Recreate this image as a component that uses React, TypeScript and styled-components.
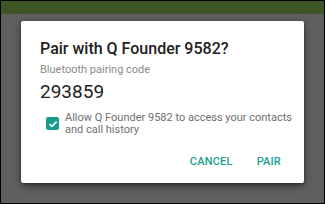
import styled, { createGlobalStyle } from "styled-components";

const GlobalStyle = createGlobalStyle`
  html, body {
    margin: 0;
    padding: 0;
    background: #000;
  }
  * {
    box-sizing: border-box;
  }
`;

const Screen = styled.div`
  width: 325px;
  height: 204px;
  border: 1px solid #000;
  background: #606060;
  display: flex;
  flex-direction: column;
  font-family: Roboto, "Noto Sans", sans-serif;
  overflow: hidden;
`;

const AppBar = styled.div`
  height: 13px;
  background: #3d5624;
  flex-shrink: 0;
`;

const Scrim = styled.div`
  flex: 1;
  padding: 7px 20px 0 20px;
`;

const Dialog = styled.div`
  width: 283px;
  height: 162px;
  background: #fff;
  border-radius: 2px;
  box-shadow: 0 3px 8px rgba(0, 0, 0, 0.45), 0 1px 3px rgba(0, 0, 0, 0.3);
  padding: 17px 8px 0 19px;
  display: flex;
  flex-direction: column;
`;

const Title = styled.div`
  font-size: 16px;
  line-height: 22px;
  font-weight: 500;
  color: #212121;
`;

const Label = styled.div`
  margin-top: 3px;
  font-size: 11px;
  line-height: 14px;
  color: #8a8a8a;
`;

const Code = styled.div`
  margin-top: 4px;
  font-size: 19px;
  line-height: 22px;
  color: #212121;
`;

const CheckRow = styled.label`
  margin-top: 9px;
  display: flex;
  align-items: flex-start;
  gap: 6px;
  padding-left: 6px;
`;

const Box = styled.span`
  width: 13px;
  height: 13px;
  margin-top: 5px;
  border-radius: 2px;
  background: #1a9c8c;
  display: flex;
  align-items: center;
  justify-content: center;
  flex-shrink: 0;
`;

const CheckText = styled.span`
  font-size: 11px;
  line-height: 12px;
  color: #6f6f6f;
`;

const Actions = styled.div`
  margin-top: auto;
  margin-bottom: 15px;
  display: flex;
  justify-content: flex-end;
  gap: 24px;
  padding-right: 15px;
`;

const ActionButton = styled.button`
  border: none;
  background: none;
  padding: 0;
  font-family: inherit;
  font-size: 11px;
  line-height: 13px;
  font-weight: 500;
  letter-spacing: 0.2px;
  color: #17a08f;
  text-transform: uppercase;
`;

export default function App() {
  return (
    <>
      <GlobalStyle />
      <Screen>
        <AppBar />
        <Scrim>
          <Dialog>
            <Title>Pair with Q Founder 9582?</Title>
            <Label>Bluetooth pairing code</Label>
            <Code>293859</Code>
            <CheckRow>
              <Box>
                <svg width="10" height="10" viewBox="0 0 10 10">
                  <path
                    d="M1.6 5.2 L4 7.4 L8.6 2.6"
                    fill="none"
                    stroke="#fff"
                    strokeWidth="1.6"
                  />
                </svg>
              </Box>
              <CheckText>
                Allow Q Founder 9582 to access your contacts and call history
              </CheckText>
            </CheckRow>
            <Actions>
              <ActionButton>Cancel</ActionButton>
              <ActionButton>Pair</ActionButton>
            </Actions>
          </Dialog>
        </Scrim>
      </Screen>
    </>
  );
}
